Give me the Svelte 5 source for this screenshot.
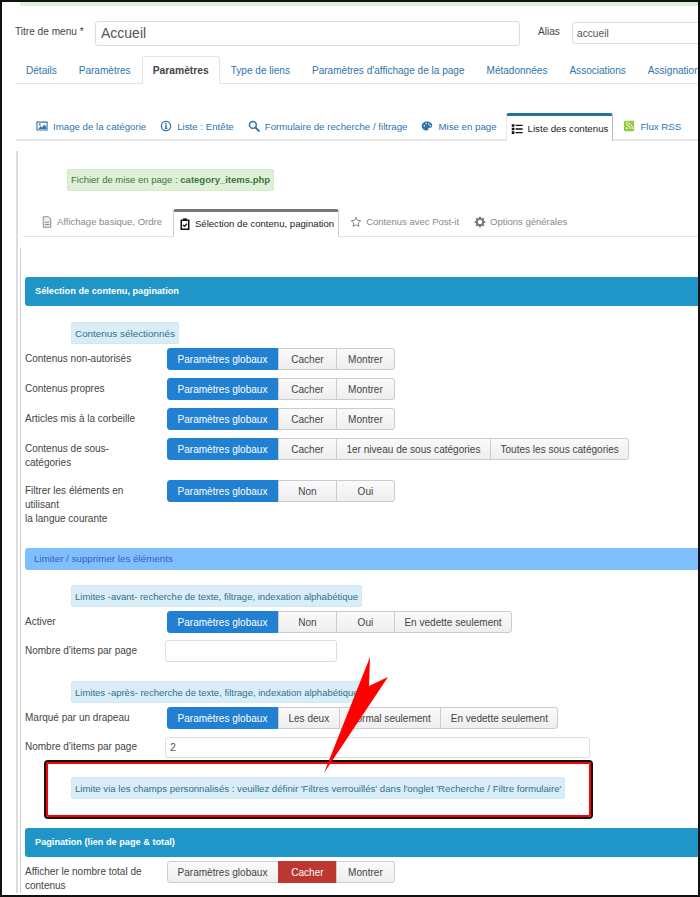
<script lang="ts">
  const mainTabs = ['Détails', 'Paramètres', 'Paramètres', 'Type de liens', "Paramètres d'affichage de la page", 'Métadonnées', 'Associations', 'Assignation'];
  const options = ['Paramètres globaux', 'Cacher', 'Montrer'];
  const selection = [
    { label: 'Contenus non-autorisés', opts: options },
    { label: 'Contenus propres', opts: options },
    { label: 'Articles mis à la corbeille', opts: options },
    { label: 'Contenus de sous-catégories', opts: ['Paramètres globaux', 'Cacher', '1er niveau de sous catégories', 'Toutes les sous catégories'], cls: 'two' },
    { label: 'Filtrer les éléments en utilisant<br>la langue courante', opts: ['Paramètres globaux', 'Non', 'Oui'], cls: 'three' }
  ];
</script>

{#snippet group(opts, active = 0, danger = false)}
  <div class="btn-group">
    {#each opts as o, i}
      <span class="btn" class:active={i === active && !danger} class:danger={i === active && danger}>{o}</span>
    {/each}
  </div>
{/snippet}

<div class="frame">
  <div class="strip"></div>

  <div class="title-row">
    <span class="title-label">Titre de menu *</span>
    <div class="title-input">Accueil</div>
    <span class="alias-label">Alias</span>
    <div class="alias-input">accueil</div>
  </div>

  <div class="main-tabs">
    {#each mainTabs as t, i}
      <span class="main-tab" class:current={i === 2}>{t}</span>
    {/each}
  </div>

  <div class="sub-tabs">
    <span class="sub-tab">
      <svg class="ico" viewBox="0 0 16 14" fill="currentColor"><path fill-rule="evenodd" d="M.5 1h15v12H.5zM2 2.500v9h12v-9z"/><path d="M3 11l3-4 2 2 3-4 2.500 3v3z"/><circle cx="5" cy="5" r="1.300"/></svg>
      Image de la catégorie
    </span>
    <span class="sub-tab">
      <svg class="ico" viewBox="0 0 16 16"><circle cx="8" cy="8" r="6.200" fill="none" stroke="currentColor" stroke-width="1.700"/><path fill="currentColor" d="M7 4h2v2H7zM6.600 7h2.500v4h.8v1H6.200v-1H7V8h-.4z"/></svg>
      Liste : Entête
    </span>
    <span class="sub-tab">
      <svg class="ico" viewBox="0 0 16 16"><circle cx="6.500" cy="6.500" r="4.600" fill="none" stroke="currentColor" stroke-width="2"/><path d="M10 10l4.500 4.500" stroke="currentColor" stroke-width="2.600" stroke-linecap="round"/></svg>
      Formulaire de recherche / filtrage
    </span>
    <span class="sub-tab">
      <svg class="ico" viewBox="0 0 16 16"><path fill="currentColor" fill-rule="evenodd" d="M8 2c4 0 7 2.300 7 5.300 0 2.200-1.800 3.200-3.500 3-1.300-.2-2 .4-1.700 1.500.3 1.300-.6 2.200-2 2.200C3.800 14 1 11.500 1 8s3-6 7-6zM4.500 6.500a1 1 0 1 0 0 2 1 1 0 0 0 0-2zM7 3.800a1 1 0 1 0 0 2 1 1 0 0 0 0-2zM10.600 4.200a1 1 0 1 0 0 2 1 1 0 0 0 0-2zM12.400 6.800a1 1 0 1 0 0 2 1 1 0 0 0 0-2z"/></svg>
      Mise en page
    </span>
    <span class="sub-tab current">
      <svg class="ico" viewBox="0 0 16 14" fill="#111"><path d="M1 .5h3.500V4H1zM1 5.250h3.500v3.500H1zM1 10h3.500v3.500H1zM6 1.300h9.500v1.800H6zM6 6.100h9.500v1.800H6zM6 10.900h9.500v1.800H6z"/></svg>
      Liste des contenus
    </span>
    <span class="sub-tab">
      <svg class="ico" viewBox="0 0 14 14"><rect x="1" y="1" width="12" height="12" rx="1.500" fill="#97c93d"/><path d="M3.500 5.500c3 0 5 2 5 5M3.500 3c4.500 0 7.500 3 7.500 7.500" fill="none" stroke="#fff" stroke-width="1.100"/><circle cx="4.500" cy="9.500" r="1" fill="#fff"/></svg>
      Flux RSS
    </span>
  </div>

  <div class="panel">
    <div class="alert-green">Fichier de mise en page : <b>category_items.php</b></div>

    <div class="inner-tabs">
      <span class="inner-tab">
        <svg class="ico" viewBox="0 0 14 16"><path d="M2 1h7l3 3v11H2z" fill="#eee" stroke="#888" stroke-width="1.300"/><path d="M4 7.500h6V9H4zM4 10.500h6V12H4z" fill="#888"/></svg>
        Affichage basique, Ordre
      </span>
      <span class="inner-tab current">
        <svg class="ico" viewBox="0 0 14 16"><path d="M2 3h10v12H2z" fill="none" stroke="#111" stroke-width="2"/><path d="M4.500 .5h5v3.500h-5z" fill="#111"/><path d="M4.300 9.200l2 2 3.500-3.700" fill="none" stroke="#111" stroke-width="1.800"/></svg>
        Sélection de contenu, pagination
      </span>
      <span class="inner-tab">
        <svg class="ico" viewBox="0 0 16 16"><path d="M8 1.800l1.900 4 4.400.6-3.200 3 .8 4.400L8 11.700l-3.900 2.100.8-4.400-3.200-3 4.400-.6z" fill="none" stroke="#777" stroke-width="1.200"/></svg>
        Contenus avec Post-it
      </span>
      <span class="inner-tab">
        <svg class="ico" viewBox="0 0 16 16"><circle cx="8" cy="8" r="4.200" fill="none" stroke="#777" stroke-width="2.600"/><path d="M8 1v3M8 12v3M1 8h3M12 8h3M3 3l2.100 2.100M10.900 10.900L13 13M13 3l-2.100 2.100M5.100 10.900L3 13" stroke="#777" stroke-width="2.600"/></svg>
        Options générales
      </span>
    </div>

    <div class="content">
      <div class="section dark">Sélection de contenu, pagination</div>

      <div class="info first">Contenus sélectionnés</div>
      {#each selection as row}
        <div class="row {row.cls ?? ''}">
          <div class="label">{@html row.label}</div>
          {@render group(row.opts)}
        </div>
      {/each}

      <div class="section light">Limiter / supprimer les éléments</div>

      <div class="info avant">Limites -avant- recherche de texte, filtrage, indexation alphabétique</div>
      <div class="row tight">
        <div class="label">Activer</div>
        {@render group(['Paramètres globaux', 'Non', 'Oui', 'En vedette seulement'])}
      </div>
      <div class="row">
        <div class="label">Nombre d'items par page</div>
        <div class="input short"></div>
      </div>

      <div class="info apres">Limites -après- recherche de texte, filtrage, indexation alphabétique</div>
      <div class="row">
        <div class="label">Marqué par un drapeau</div>
        {@render group(['Paramètres globaux', 'Les deux', 'Normal seulement', 'En vedette seulement'])}
      </div>
      <div class="row last">
        <div class="label">Nombre d'items par page</div>
        <div class="input wide">2</div>
      </div>

      <div class="red-box">
        <div class="info">Limite via les champs personnalisés : veuillez définir 'Filtres verrouillés' dans l'onglet 'Recherche / Filtre formulaire'</div>
      </div>

      <div class="section dark pagination">Pagination (lien de page &amp; total)</div>
      <div class="row">
        <div class="label">Afficher le nombre total de contenus</div>
        {@render group(options, 1, true)}
      </div>
    </div>
  </div>

  <svg class="arrow" viewBox="0 0 70 120" width="70" height="120">
    <path d="M48 1L47 30L66 21L2 117z" fill="#fe0000"/>
  </svg>
</div>

<style>
  :global(body) {
    margin: 0;
    background: #fff;
  }

  .frame {
    position: relative;
    box-sizing: border-box;
    width: 700px;
    height: 897px;
    border: 2px solid #111;
    overflow: hidden;
    background: #fff;
    font-family: "Liberation Sans", Arial, sans-serif;
    font-size: 10px;
    color: #444;
  }

  .strip {
    height: 4px;
    margin-left: 18px;
    background: #dff0d8;
  }

  .title-row {
    display: flex;
    align-items: center;
    height: 26px;
    margin-top: 14px;
    padding-left: 13px;
    white-space: nowrap;
  }

  .title-label {
    flex: none;
    width: 80px;
    font-size: 10.100px;
    margin-top: -3px;
  }

  .title-input {
    flex: none;
    box-sizing: border-box;
    width: 425px;
    height: 25px;
    padding: 0 5px;
    line-height: 23px;
    font-size: 14px;
    color: #555;
    border: 1px solid #ddd;
    border-radius: 3px;
  }

  .alias-label {
    flex: none;
    margin-left: 18px;
    width: 34px;
    font-size: 10.100px;
    margin-top: -3px;
  }

  .alias-input {
    box-sizing: border-box;
    flex: none;
    width: 200px;
    height: 22px;
    padding: 0 4px;
    line-height: 22px;
    font-size: 10.200px;
    color: #555;
    border: 1px solid #ddd;
    border-radius: 3px;
  }

  .main-tabs {
    display: flex;
    align-items: flex-end;
    height: 27px;
    margin: 10px 0 0 13px;
    border-bottom: 1px solid #e4e4e4;
    white-space: nowrap;
  }

  .main-tab {
    padding: 0 10px;
    line-height: 27px;
    color: #2e74ad;
    border: 1px solid transparent;
    border-bottom: none;
    margin-bottom: -1px;
    font-size: 10.050px;
  }

  .main-tab.current {
    color: #444;
    font-weight: bold;
    font-size: 10.300px;
    background: #fff;
    border-color: #e4e4e4;
    border-radius: 3px 3px 0 0;
    height: 27px;
  }

  .sub-tabs {
    display: flex;
    align-items: flex-end;
    height: 26px;
    margin: 29px 0 0 14px;
    padding-left: 20px;
    border-bottom: 2px solid #e8e8e8;
    white-space: nowrap;
  }

  .sub-tab {
    display: flex;
    align-items: center;
    gap: 5px;
    height: 26px;
    margin-right: 14px;
    color: #2e74ad;
    font-size: 9.700px;
  }

  .sub-tab.current {
    box-sizing: border-box;
    height: 28px;
    margin: 0 10px 0 -5px;
    padding: 0 4px 0 4px;
    color: #222;
    background: #fff;
    border-top: 3px solid #22729f;
    border-right: 1px solid #bbb;
    border-left: 1px solid #e8e8e8;
    border-radius: 3px 3px 0 0;
    margin-bottom: -2px;
  }

  .ico {
    flex: none;
    width: 12px;
    height: 12px;
  }

  .panel {
    margin: 10px 0 0 14px;
    padding-top: 18px;
    border-left: 2px solid #ddd;
  }

  .alert-green {
    box-sizing: border-box;
    width: 207px;
    height: 22px;
    margin-left: 49px;
    padding-left: 3px;
    line-height: 20px;
    font-size: 9.500px;
    color: #3c763d;
    background: #dff0d8;
    border: 1px solid #d6e9c6;
    border-radius: 2px;
    white-space: nowrap;
  }

  .inner-tabs {
    display: flex;
    align-items: flex-end;
    height: 27px;
    margin: 18px 0 0 5px;
    padding-left: 18px;
    border-bottom: 1px solid #e4e4e4;
    white-space: nowrap;
  }

  .inner-tab {
    display: flex;
    align-items: center;
    gap: 4px;
    box-sizing: border-box;
    height: 26px;
    padding-bottom: 3px;
    margin-right: 15px;
    color: #888;
    font-size: 9.500px;
  }

  .inner-tab.current {
    height: 28px;
    margin: 0 11px 0 -4px;
    padding: 0 4px 2px 5px;
    color: #222;
    font-size: 9.600px;
    background: #fff;
    border: 1px solid #ccc;
    border-top: 3px solid #777;
    border-bottom: none;
    border-radius: 3px 3px 0 0;
    margin-bottom: -1px;
  }

  .content {
    margin: 11px 0 0 2px;
    padding: 29px 0 0 4px;
    border-left: 1px solid #ccc;
  }

  .section {
    box-sizing: border-box;
    padding-left: 10px;
    border-radius: 3px 0 0 3px;
    white-space: nowrap;
  }

  .section.dark {
    height: 29px;
    line-height: 28px;
    color: #fff;
    font-weight: bold;
    font-size: 9.200px;
    background: #2095c8;
  }

  .section.light {
    height: 22px;
    padding-left: 9px;
    line-height: 21px;
    color: #3b62b0;
    font-size: 9.800px;
    background: #7fbfff;
  }

  .section.pagination {
    margin-top: 11px;
  }

  .info {
    box-sizing: border-box;
    width: fit-content;
    height: 22px;
    margin-left: 46px;
    padding: 0 3px;
    line-height: 21px;
    font-size: 9.500px;
    color: #31708f;
    background: #d9edf7;
    border: 1px solid #cfe8f4;
    border-radius: 2px;
    white-space: nowrap;
  }

  .info.first {
    margin-top: 16px;
    font-size: 9.900px;
  }

  .info.avant {
    margin-top: 15px;
  }

  .info.apres {
    margin-top: 19px;
  }

  .row {
    display: flex;
    align-items: flex-start;
    min-height: 22px;
    margin: 4px 0 8px;
  }

  .row.tight {
    margin-bottom: 7px;
  }

  .row.last {
    min-height: 21px;
    margin-bottom: 0;
  }

  .row.two {
    height: 34px;
  }

  .row.three {
    height: 68px;
    margin-bottom: 0;
  }

  .label {
    box-sizing: border-box;
    flex: none;
    width: 142px;
    padding: 4px 17px 0 0;
    font-size: 10px;
    line-height: 14px;
    color: #444;
  }

  .row.last .label {
    padding-top: 3px;
  }

  .btn-group {
    display: flex;
    white-space: nowrap;
  }

  .btn {
    box-sizing: border-box;
    min-width: 59px;
    height: 22px;
    padding: 0 9.500px;
    margin-left: -1px;
    line-height: 21px;
    text-align: center;
    font-size: 10.050px;
    color: #444;
    background: linear-gradient(#fafafa, #eee);
    border: 1px solid #ccc;
  }

  .btn:first-child {
    margin-left: 0;
    padding-right: 10.500px;
    border-radius: 3px 0 0 3px;
  }

  .btn:last-child {
    border-radius: 0 3px 3px 0;
  }

  .btn.active {
    color: #fff;
    background: #2180d2;
    border-color: #2180d2;
  }

  .btn.danger {
    color: #fff;
    background: #bd362f;
    border-color: #bd362f;
  }

  .input {
    box-sizing: border-box;
    height: 22px;
    margin-left: -2px;
    padding: 0 4px;
    line-height: 20px;
    font-size: 10.500px;
    color: #555;
    border: 1px solid #ddd;
    border-radius: 3px;
  }

  .input.short {
    width: 172px;
  }

  .input.wide {
    width: 425px;
    height: 21px;
    line-height: 19px;
  }

  .red-box {
    box-sizing: border-box;
    width: 545px;
    height: 55px;
    margin: 4px 0 0 21px;
    padding-top: 13px;
    background: #fff;
    border: 2px solid #f00;
    outline: 2px solid #111;
    border-radius: 2px;
  }

  .red-box .info {
    margin-left: 23px;
    font-size: 9.650px;
  }

  .arrow {
    position: absolute;
    left: 320px;
    top: 654px;
  }
</style>
